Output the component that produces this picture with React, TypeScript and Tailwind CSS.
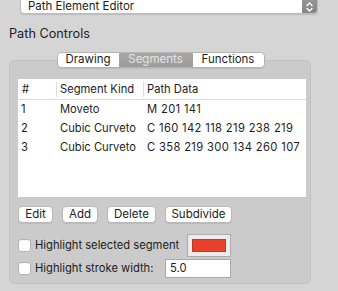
import { useState } from "react";

const rows = [
  { n: "1", kind: "Moveto", data: "M 201 141" },
  { n: "2", kind: "Cubic Curveto", data: "C 160 142 118 219 238 219" },
  { n: "3", kind: "Cubic Curveto", data: "C 358 219 300 134 260 107" },
];

const tabs = ["Drawing", "Segments", "Functions"];

function PushButton({ label, w }: { label: string; w: string }) {
  return (
    <button
      className={`${w} h-[17px] flex items-center justify-center rounded-[4px] bg-white border border-[#b9b9b9] shadow-[0_1px_0_rgba(0,0,0,0.08)] text-[11.5px] leading-none text-[#222]`}
    >
      {label}
    </button>
  );
}

function CheckBox() {
  return <div className="w-[13px] h-[13px] shrink-0 rounded-[3px] bg-white border border-[#b3b3b3] shadow-[inset_0_1px_0_rgba(0,0,0,0.04)]" />;
}

export default function App() {
  const [tab] = useState("Segments");

  return (
    <div className="w-[338px] h-[291px] overflow-hidden bg-[#d5d5d5] font-['Inter',sans-serif] text-[#1d1d1d]">
      {/* popup button, cut off at the top */}
      <div className="ml-[20px] w-[298px] h-[20px] -mt-[6px] flex rounded-[4px] bg-white border border-[#bdbdbd] shadow-[0_1px_1px_rgba(0,0,0,0.12)] overflow-hidden">
        <div className="flex-1 flex items-end pl-[7px] text-[11.5px] leading-[14px]">Path Element Editor</div>
        <div className="w-[15px] bg-gradient-to-b from-[#9a9a9a] to-[#858585] flex flex-col items-center justify-center pt-[5px]">
          <svg width="9" height="12" viewBox="0 0 9 12" fill="none" stroke="white" strokeWidth="1.4" strokeLinecap="round" strokeLinejoin="round">
            <path d="M2 4.5 L4.5 2 L7 4.5" />
            <path d="M2 7.5 L4.5 10 L7 7.5" />
          </svg>
        </div>
      </div>

      <div className="ml-[9px] mt-[12px] text-[12.7px] leading-[16px] text-[#222]">Path Controls</div>

      <div className="mt-[10px] ml-[9px] w-[302px]">
        {/* segmented tabs */}
        <div className="relative z-10 flex justify-center pl-[1px]">
          <div className="flex h-[16px] rounded-[4px] border border-[#b4b4b4] bg-white shadow-[0_1px_0_rgba(0,0,0,0.08)] overflow-hidden text-[11.5px] leading-none">
            {tabs.map((t, i) => (
              <div
                key={t}
                className={`flex items-center justify-center ${i === 0 ? "w-[61px]" : i === 1 ? "w-[74px]" : "w-[71px]"} ${
                  t === tab ? "bg-gradient-to-b from-[#a9a9a9] to-[#9b9b9b] text-[#e4e4e4]" : "text-[#1d1d1d]"
                } ${i > 0 && t !== tab && tabs[i - 1] !== tab ? "border-l border-[#c8c8c8]" : ""}`}
              >
                {t}
              </div>
            ))}
          </div>
        </div>

        {/* group box */}
        <div className="-mt-[8px] h-[224px] rounded-[5px] bg-[#cbcbcb] border border-[#c2c2c2] pt-[18px] pl-[8px] pr-[4px] flex flex-col">
          <div className="w-[288px] h-[118px] bg-white text-[11.2px]">
            <div className="flex h-[21px] items-center border-b border-[#dcdcdc]">
              <div className="w-[38px] pl-[4px]">#</div>
              <div className="w-px h-[15px] bg-[#dddddd]" />
              <div className="w-[86px] pl-[3px]">Segment Kind</div>
              <div className="w-px h-[15px] bg-[#dddddd]" />
              <div className="pl-[3px]">Path Data</div>
            </div>
            {rows.map((r) => (
              <div key={r.n} className="flex h-[19px] items-center">
                <div className="w-[39px] pl-[3px]">{r.n}</div>
                <div className="w-[87px] pl-[3px]">{r.kind}</div>
                <div className="pl-[3px] tracking-[0.35px]">{r.data}</div>
              </div>
            ))}
          </div>

          <div className="flex gap-[9px] mt-[9px]">
            <PushButton label="Edit" w="w-[35px]" />
            <PushButton label="Add" w="w-[36px]" />
            <PushButton label="Delete" w="w-[49px]" />
            <PushButton label="Subdivide" w="w-[67px]" />
          </div>

          <div className="flex items-center mt-[11px] h-[23px] text-[11.2px]">
            <CheckBox />
            <span className="ml-[4px] w-[152px] whitespace-nowrap">Highlight selected segment</span>
            <div className="w-[44px] h-[23px] bg-[#ececec] border border-[#ababab] p-[4px]">
              <div className="w-full h-full bg-[#e8412b] border border-[#c0392b]" />
            </div>
          </div>

          <div className="flex items-center mt-[2px] h-[19px] text-[11.2px]">
            <CheckBox />
            <span className="ml-[4px] w-[130px] whitespace-nowrap">Highlight stroke width:</span>
            <div className="w-[66px] h-[19px] bg-white border border-[#a9a9a9] flex items-center pl-[4px]">5.0</div>
          </div>
        </div>
      </div>
    </div>
  );
}
